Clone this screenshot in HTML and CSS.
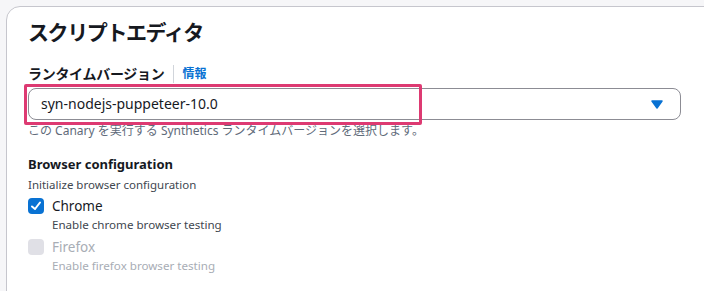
FILE: index.html
```html
<!DOCTYPE html>
<html lang="ja">
<head>
    <meta charset="UTF-8">
    <title>スクリプトエディタ</title>
    <link rel="stylesheet" href="styles.css">
</head>
<body>
    <div class="panel">
        <h2 class="panel-title">スクリプトエディタ</h2>

        <div class="field">
            <div class="field-label">
                <span>ランタイムバージョン</span>
                <span class="divider"></span>
                <a href="#" class="info-link">情報</a>
            </div>
            <div class="select-wrap">
                <div class="select">
                    <span class="select-value">syn-nodejs-puppeteer-10.0</span>
                    <svg class="caret" width="12" height="9" viewBox="0 0 12 9">
                        <path d="M1 1 L11 1 L6 8 Z" fill="#0972d3" stroke="#0972d3" stroke-width="1.5" stroke-linejoin="round"/>
                    </svg>
                </div>
                <div class="highlight"></div>
            </div>
            <p class="field-desc">この Canary を実行する Synthetics ランタイムバージョンを選択します。</p>
        </div>

        <div class="field group">
            <div class="group-title">Browser configuration</div>
            <p class="group-desc">Initialize browser configuration</p>

            <div class="check-row">
                <span class="checkbox checked">
                    <svg width="16" height="16" viewBox="0 0 16 16">
                        <path d="M4 8.5 L7 11 L12 4.5" fill="none" stroke="#fff" stroke-width="2" stroke-linecap="round" stroke-linejoin="round"/>
                    </svg>
                </span>
                <div>
                    <div class="check-label">Chrome</div>
                    <div class="check-desc">Enable chrome browser testing</div>
                </div>
            </div>

            <div class="check-row disabled">
                <span class="checkbox"></span>
                <div>
                    <div class="check-label">Firefox</div>
                    <div class="check-desc">Enable firefox browser testing</div>
                </div>
            </div>
        </div>
    </div>
</body>
</html>
```

FILE: styles.css
```css
* {
    margin: 0;
    padding: 0;
    box-sizing: border-box;
}

body {
    font-family: 'Noto Sans', 'Noto Sans CJK JP', sans-serif;
    background: #f6f6f8;
    color: #16191f;
    padding: 6px 0 0 6px;
    overflow: hidden;
    height: 291px;
}

.panel {
    background: white;
    border: 1px solid #c6c6cd;
    border-radius: 14px;
    width: 720px;
    height: 320px;
    padding: 10px 0 0 21px;
}

.panel-title {
    font-size: 21px;
    font-weight: 700;
    line-height: 30px;
    letter-spacing: -1.4px;
}

.field {
    margin-top: 17px;
}

.field-label {
    display: flex;
    align-items: center;
    font-size: 14px;
    font-weight: 600;
    line-height: 20px;
    letter-spacing: -0.3px;
}

.divider {
    width: 1px;
    height: 18px;
    background: #d1d5db;
    margin: 0 8px 0 9px;
}

.info-link {
    color: #0972d3;
    font-size: 12px;
    font-weight: 700;
    letter-spacing: 0;
    text-decoration: none;
}

.select-wrap {
    position: relative;
    margin-top: 4px;
    width: 653px;
}

.select {
    display: flex;
    align-items: center;
    justify-content: space-between;
    height: 32px;
    border: 1px solid #8c8c94;
    border-radius: 8px;
    padding: 0 17px 0 12px;
}

.select-value {
    font-size: 14px;
    line-height: 20px;
}

.highlight {
    position: absolute;
    left: -4px;
    top: -4px;
    width: 398px;
    height: 41px;
    border: 3px solid #dd3a72;
    border-radius: 2px;
}

.field-desc {
    margin-top: 2px;
    font-size: 12px;
    line-height: 18px;
    color: #5f6b7a;
}

.group {
    margin-top: 14px;
}

.group-title {
    font-size: 13px;
    font-weight: 700;
    line-height: 20px;
}

.group-desc {
    margin-top: 2px;
    font-size: 11.5px;
    line-height: 18px;
    color: #414750;
}

.check-row {
    display: flex;
    gap: 8px;
    margin-top: 2px;
}

.check-row + .check-row {
    margin-top: 3px;
}

.checkbox {
    width: 16px;
    height: 16px;
    margin-top: 2px;
    border-radius: 4px;
    background: #d5dbdb;
    display: flex;
}

.checkbox.checked {
    background: #0972d3;
}

.check-label {
    font-size: 13.5px;
    line-height: 20px;
}

.check-desc {
    font-size: 11.6px;
    line-height: 18px;
    color: #414750;
}

.disabled .checkbox {
    background: #e0e0e6;
}

.disabled .check-label,
.disabled .check-desc {
    color: #a8adb5;
}
```
